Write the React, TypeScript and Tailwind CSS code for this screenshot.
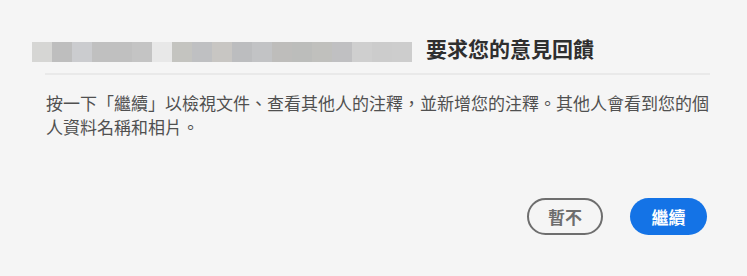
const blocks = [
  '#d6d6d4', '#bebebe', '#cbcccf', '#c0c0c0', '#c0c0c0', '#c4c4c4', '#e8e8e8',
  '#c4c4c0', '#bfc0c2', '#c8c6c3', '#bcbdbf', '#c2c3c5', '#bebdbb', '#bcbdbb',
  '#c0c0bd', '#c0c0c2', '#cfcfcf', '#cccccc', '#cdcdcd',
];

function Redacted() {
  return (
    <div className="flex h-[20px] self-end">
      {blocks.map((c, i) => (
        <div key={i} className="h-[20px] w-[20px]" style={{ backgroundColor: c }} />
      ))}
    </div>
  );
}

export default function App() {
  return (
    <div
      className="flex h-[276px] w-[747px] flex-col bg-[#f5f5f5]"
      style={{ fontFamily: '"Noto Sans CJK TC", "Noto Sans", sans-serif' }}
    >
      <div className="flex items-start pl-[32px] pt-[34px]">
        <Redacted />
        <h1 className="ml-[14px] text-[21px] font-bold leading-[28px] text-[#2f2f2f]">
          要求您的意見回饋
        </h1>
      </div>
      <div className="ml-[45px] mt-[11px] h-[2px] w-[665px] bg-[#e9e9e9]" />
      <p className="mt-[16px] w-[672px] pl-[46px] text-[17px] leading-[24px] text-[#505050] box-content">
        按一下「繼續」以檢視文件、查看其他人的注釋，並新增您的注釋。其他人會看到您的個人資料名稱和相片。
      </p>
      <div className="mt-auto flex justify-end gap-[27px] pb-[41px] pr-[40px]">
        <button className="h-[37px] w-[76px] rounded-full border-2 border-[#6e6e6e] text-[17px] font-semibold text-[#6e6e6e]">
          暫不
        </button>
        <button className="h-[37px] w-[77px] rounded-full bg-[#1473e6] text-[17px] font-bold text-white">
          繼續
        </button>
      </div>
    </div>
  );
}
